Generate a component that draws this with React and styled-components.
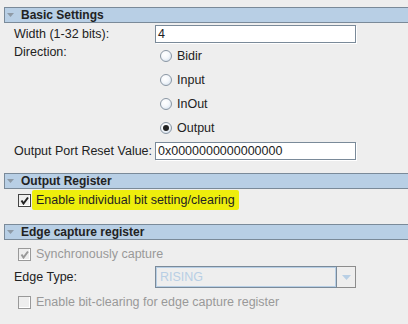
import React from "react"
import styled, { createGlobalStyle } from "styled-components"

const GlobalStyle = createGlobalStyle`
  html, body {
    margin: 0;
    background: #eeeeee;
  }
  body {
    font-family: "Liberation Sans", Arial, sans-serif;
    font-size: 12.5px;
    color: #222222;
  }
`

const Page = styled.div`
  padding: 7px 0 0 4px;
  width: 404px;
`

const Section = styled.section`
  margin-bottom: ${(p) => p.$gap || 0}px;
`

const Header = styled.div`
  display: flex;
  align-items: center;
  height: 14px;
  background: #b8cfe5;
  border: 1px solid #7a8a99;
  border-right: none;
  font-weight: bold;
  font-size: 12px;
  color: #222222;
  padding-left: 2px;
  gap: 7px;
`

const Caret = styled.svg`
  width: 7px;
  height: 4px;
  flex: none;
`

const Grid = styled.div`
  display: grid;
  grid-template-columns: 141px 201px;
  padding-left: 10px;
  align-items: center;
`

const Label = styled.div`
  line-height: 16px;
  white-space: nowrap;
  align-self: ${(p) => (p.$top ? "start" : "center")};
  padding-top: ${(p) => (p.$top ? 0 : 0)}px;
`

const TextField = styled.div`
  height: 16px;
  border: 1px solid #7a8a99;
  box-shadow: 1px 1px 0 #ffffff;
  background: #ffffff;
  padding-left: 2px;
  line-height: 17px;
  margin-top: ${(p) => p.$mt || 0}px;
  margin-bottom: 1px;
  white-space: nowrap;
  overflow: hidden;
`

const RadioList = styled.div`
  display: flex;
  flex-direction: column;
  padding-left: 5px;
`

const RadioRow = styled.div`
  display: flex;
  align-items: center;
  gap: 5px;
  height: 24px;
`

const RadioCircle = styled.span`
  box-sizing: border-box;
  width: 12px;
  height: 12px;
  border-radius: 50%;
  border: 1px solid #8a96a3;
  background: radial-gradient(circle at 40% 35%, #ffffff 0%, #f4f7fb 45%, #c9d8e8 100%);
  display: flex;
  align-items: center;
  justify-content: center;
  &::after {
    content: "";
    display: ${(p) => (p.$checked ? "block" : "none")};
    width: 6px;
    height: 6px;
    border-radius: 50%;
    background: #222222;
  }
`

const CheckRow = styled.div`
  display: flex;
  align-items: center;
  height: ${(p) => p.$h || 20}px;
  padding-left: 14px;
  margin-top: ${(p) => p.$mt || 0}px;
  color: ${(p) => (p.$disabled ? "#999999" : "#222222")};
`

const Box = styled.span`
  box-sizing: border-box;
  width: 13px;
  height: 13px;
  border: 1px solid ${(p) => (p.$disabled ? "#999999" : "#444444")};
  box-shadow: inset -1px -1px 0 #ffffff;
  background: #eeeeee;
  display: flex;
  align-items: center;
  justify-content: center;
  flex: none;
`

const CheckText = styled.span`
  margin-left: 1px;
  padding: 0 4px 0 4px;
  height: 20px;
  line-height: 20px;
  white-space: nowrap;
  background: ${(p) => (p.$highlight ? "#eeee0c" : "transparent")};
  border-radius: 2px;
`

const Combo = styled.div`
  display: flex;
  height: 22px;
  margin: 2px 0 2px;
`

const ComboField = styled.div`
  box-sizing: border-box;
  width: 182px;
  height: 22px;
  border: 1px solid #7a8a99;
  box-shadow: inset 0 0 0 1px #b8cfe5;
  color: #b8cfe5;
  padding-left: 4px;
  line-height: 20px;
`

const ComboButton = styled.div`
  box-sizing: border-box;
  width: 19px;
  height: 22px;
  border: 1px solid #8c8c8c;
  border-left: none;
  display: flex;
  align-items: center;
  justify-content: center;
`

const Caret2 = () => (
  <Caret viewBox="0 0 7 4">
    <path d="M0 0 H7 L3.5 4 Z" fill="#8e9aa6" />
  </Caret>
)

const Check = ({ disabled }) => (
  <svg width="9" height="9" viewBox="0 0 9 9">
    <path
      d="M1.5 4.5 L3.5 7.5 L8 1.5"
      fill="none"
      stroke={disabled ? "#999999" : "#222222"}
      strokeWidth="2"
    />
  </svg>
)

const CheckBox = ({ checked, disabled, highlight, children, ...props }) => (
  <CheckRow $disabled={disabled} {...props}>
    <Box $disabled={disabled}>{checked && <Check disabled={disabled} />}</Box>
    <CheckText $highlight={highlight}>{children}</CheckText>
  </CheckRow>
)

const directions = ["Bidir", "Input", "InOut", "Output"]

export default function App() {
  return (
    <Page>
      <GlobalStyle />
      <Section $gap={12}>
        <Header>
          <Caret2 />
          Basic Settings
        </Header>
        <Grid>
          <Label>Width (1-32 bits):</Label>
          <TextField $mt={2}>4</TextField>
          <Label $top>Direction:</Label>
          <RadioList>
            {directions.map((d) => (
              <RadioRow key={d}>
                <RadioCircle $checked={d === "Output"} />
                {d}
              </RadioRow>
            ))}
          </RadioList>
          <Label>Output Port Reset Value:</Label>
          <TextField $mt={2}>0x0000000000000000</TextField>
        </Grid>
      </Section>
      <Section $gap={14}>
        <Header>
          <Caret2 />
          Output Register
        </Header>
        <CheckBox checked highlight $mt={1}>
          Enable individual bit setting/clearing
        </CheckBox>
      </Section>
      <Section>
        <Header>
          <Caret2 />
          Edge capture register
        </Header>
        <CheckBox checked disabled $mt={4}>
          Synchronously capture
        </CheckBox>
        <Grid>
          <Label>Edge Type:</Label>
          <Combo>
            <ComboField>RISING</ComboField>
            <ComboButton>
              <svg width="9" height="5" viewBox="0 0 9 5">
                <path d="M0 0 H9 L4.5 5 Z" fill="#b8cfe5" />
              </svg>
            </ComboButton>
          </Combo>
        </Grid>
        <CheckBox disabled $mt={2}>
          Enable bit-clearing for edge capture register
        </CheckBox>
      </Section>
    </Page>
  )
}
